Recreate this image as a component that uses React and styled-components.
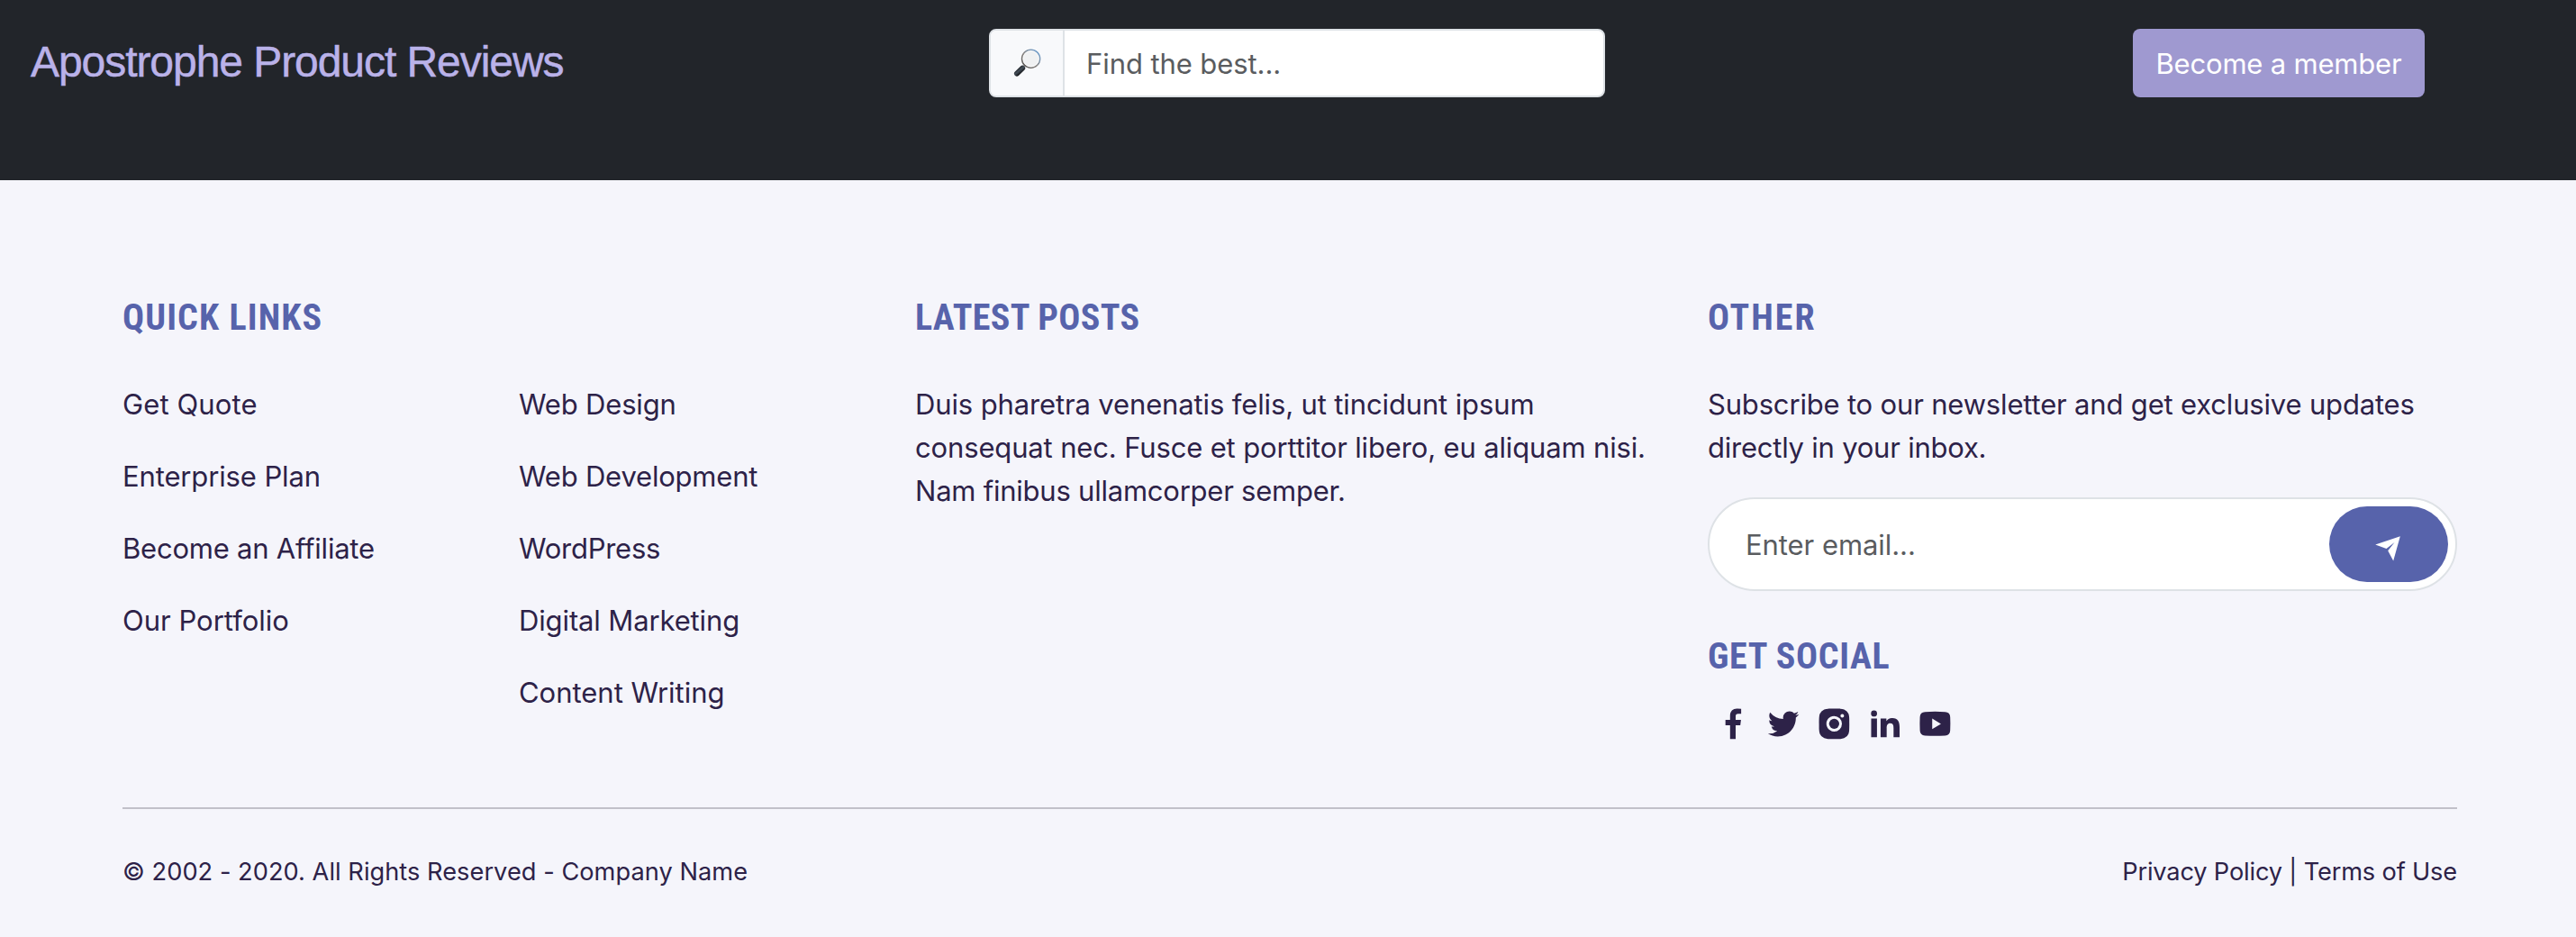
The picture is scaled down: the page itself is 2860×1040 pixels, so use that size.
import React from 'react';
import styled, { createGlobalStyle } from 'styled-components';
import { BiLogoFacebook, BiLogoTwitter, BiLogoInstagramAlt } from 'react-icons/bi';

const GlobalStyle = createGlobalStyle`
  *, *::before, *::after { box-sizing: border-box; }
  body {
    margin: 0;
    background: #f5f5fb;
    color: #2d2248;
    font-family: Inter, "Liberation Sans", sans-serif;
    font-size: 31px;
    line-height: 48px;
  }
`;

const Page = styled.div`
  width: 2860px;
  height: 1040px;
  overflow: hidden;
`;

const Header = styled.header`
  display: grid;
  grid-template-columns: 1064px 684px 1fr;
  align-items: start;
  height: 200px;
  padding: 32px 168px 0 34px;
  background: #22252a;
`;

const Brand = styled.a`
  color: #bab2e9;
  font-family: "Liberation Sans", Arial, sans-serif;
  font-size: 48px;
  line-height: 74px;
  letter-spacing: -1.06px;
  white-space: nowrap;
  -webkit-text-stroke: 0.5px #bab2e9;
`;

const SearchGroup = styled.div`
  display: flex;
  height: 76px;
  border: 2px solid #dee2e6;
  border-radius: 8px;
  overflow: hidden;
  background: #fff;
`;

const SearchPrefix = styled.span`
  display: flex;
  align-items: center;
  justify-content: center;
  width: 82px;
  border-right: 2px solid #dee2e6;
  background: #f8f9fb;
`;

const Placeholder = styled.span`
  flex: 1;
  padding: ${(p) => p.$pad};
  color: #5a5c5f;
  letter-spacing: ${(p) => p.$ls || 0}px;
`;

const MemberButton = styled.button`
  justify-self: end;
  width: 324px;
  height: 76px;
  padding: 1px 0 0;
  border: 0;
  border-radius: 8px;
  background: #9f99d0;
  color: #fff;
  font: inherit;
  letter-spacing: -0.19px;
`;

const Footer = styled.footer`
  padding: 127px 132px 0 136px;
`;

const Columns = styled.div`
  display: grid;
  grid-template-columns: 880px 880px 832px;
  height: 569px;
`;

const Heading = styled.h5`
  margin: ${(p) => p.$top || 0}px 0 ${(p) => p.$bottom}px;
  color: #5763ab;
  font-family: Roboto, sans-serif;
  font-size: 40px;
  font-weight: 700;
  font-stretch: 75%;
  line-height: 51px;
  letter-spacing: ${(p) => p.$ls || 0}px;
`;

const LinkColumns = styled.div`
  display: grid;
  grid-template-columns: 440px 440px;
`;

const LinkList = styled.ul`
  display: flex;
  flex-direction: column;
  gap: 32px;
  margin: 0;
  padding: 0;
  list-style: none;
`;

const LinkItem = styled.li`
  letter-spacing: ${(p) => p.$ls}px;
`;

const Paragraph = styled.p`
  margin: 0;
`;

const Line = styled.span`
  display: block;
  white-space: nowrap;
  letter-spacing: ${(p) => p.$ls}px;
`;

const EmailForm = styled.form`
  display: flex;
  align-items: center;
  height: 104px;
  margin-top: 31px;
  padding: 8px;
  border: 2px solid #dee2e6;
  border-radius: 52px;
  background: #fff;
`;

const SendButton = styled.button`
  display: flex;
  align-items: center;
  justify-content: center;
  width: 132px;
  height: 84px;
  padding: 9px 3px 0 0;
  border: 0;
  border-radius: 42px;
  background: #5763ab;
`;

const SocialRow = styled.div`
  display: flex;
  gap: 11.3px;
  padding-left: 6px;
  font-size: 44.8px;

  svg { display: block; }
`;

const TwitterIcon = styled(BiLogoTwitter)`
  transform: scale(0.94);
`;

const Divider = styled.hr`
  height: 2px;
  margin: 0 0 49px;
  border: 0;
  background: #c1c0c9;
`;

const Bottom = styled.div`
  display: flex;
  justify-content: space-between;
  font-size: 27.2px;
  line-height: 42px;
`;

const SmallText = styled.span`
  letter-spacing: ${(p) => p.$ls}px;
`;

const services = [
  ['Get Quote', 0.12],
  ['Enterprise Plan', -0.13],
  ['Become an Affiliate', -0.22],
  ['Our Portfolio', 0],
];

const topics = [
  ['Web Design', -0.17],
  ['Web Development', -0.2],
  ['WordPress', -0.26],
  ['Digital Marketing', -0.13],
  ['Content Writing', -0.02],
];

const posts = [
  ['Duis pharetra venenatis felis, ut tincidunt ipsum', -0.13],
  ['consequat nec. Fusce et porttitor libero, eu aliquam nisi.', -0.15],
  ['Nam finibus ullamcorper semper.', -0.23],
];

const newsletter = [
  ['Subscribe to our newsletter and get exclusive updates', -0.175],
  ['directly in your inbox.', -0.23],
];

function MagnifierIcon() {
  return (
    <svg width="32" height="32" viewBox="0 0 32 32" fill="none">
      <defs>
        <linearGradient id="rim" x1="10" y1="21" x2="28" y2="2" gradientUnits="userSpaceOnUse">
          <stop offset="0" stopColor="#4a4745" />
          <stop offset="0.5" stopColor="#8b8784" />
          <stop offset="1" stopColor="#6f9fd0" />
        </linearGradient>
        <linearGradient id="grip" x1="5" y1="22" x2="10" y2="28" gradientUnits="userSpaceOnUse">
          <stop offset="0" stopColor="#15181b" />
          <stop offset="0.45" stopColor="#46505a" />
          <stop offset="1" stopColor="#08090a" />
        </linearGradient>
      </defs>
      <path d="M14.6 17.6 11.6 20.6" stroke="#aaa" strokeWidth="2" />
      <path d="M11.2 21.6 5 27.6" stroke="url(#grip)" strokeWidth="6" strokeLinecap="round" />
      <circle cx="20.6" cy="11.2" r="10" fill="#f0f1f2" stroke="url(#rim)" strokeWidth="1.6" />
      <circle cx="20.6" cy="11.2" r="8.8" stroke="#fff" strokeWidth="0.7" />
    </svg>
  );
}

function PlaneIcon() {
  return (
    <svg width="28" height="28" viewBox="0 0 28 28" fill="#fff">
      <path d="M27.8 0.2 0.2 9.6 12.5 13.9 21.5 6.9 14.2 16.2 20.2 27.6Z" />
    </svg>
  );
}

function LinkedinIcon() {
  return (
    <svg width="1em" height="1em" viewBox="0 0 24 24" fill="currentColor">
      <circle cx="5.7" cy="5.85" r="1.8" />
      <path d="M4 8.85h3.45V20H4zM9.6 8.85h3.45v1.53h.05c.48-.9 1.64-1.85 3.4-1.85 3.62 0 4.4 2.37 4.4 5.45V20h-3.58v-5.33c0-1.33-.03-3.05-1.9-3.05-1.9 0-2.2 1.45-2.2 2.95V20H9.6z" />
    </svg>
  );
}

function YoutubeIcon() {
  return (
    <svg width="1em" height="1em" viewBox="0 0 24 24" fill="currentColor" fillRule="evenodd">
      <path d="M6 4.9Q12 4.6 18 4.9Q20.9 5 21 8Q21.2 12 21 16Q20.9 18.9 18 19Q12 19.3 6 19Q3.1 18.9 3 16Q2.8 12 3 8Q3.1 5 6 4.9ZM10.3 8.8V15.2L15.5 12Z" />
    </svg>
  );
}

function TextLines({ lines }) {
  return (
    <Paragraph>
      {lines.map(([text, ls]) => (
        <Line key={text} $ls={ls}>{text}</Line>
      ))}
    </Paragraph>
  );
}

function Links({ items }) {
  return (
    <LinkList>
      {items.map(([text, ls]) => (
        <LinkItem key={text} $ls={ls}>{text}</LinkItem>
      ))}
    </LinkList>
  );
}

export default function App() {
  return (
    <Page>
      <GlobalStyle />
      <Header>
        <Brand>Apostrophe Product Reviews</Brand>
        <SearchGroup>
          <SearchPrefix><MagnifierIcon /></SearchPrefix>
          <Placeholder $pad="13px 24px 11px" $ls={-0.08}>Find the best...</Placeholder>
        </SearchGroup>
        <MemberButton>Become a member</MemberButton>
      </Header>
      <Footer>
        <Columns>
          <section>
            <Heading $bottom={47} $ls={1.1}>QUICK LINKS</Heading>
            <LinkColumns>
              <Links items={services} />
              <Links items={topics} />
            </LinkColumns>
          </section>
          <section>
            <Heading $bottom={47} $ls={0.35}>LATEST POSTS</Heading>
            <TextLines lines={posts} />
          </section>
          <section>
            <Heading $bottom={47} $ls={2}>OTHER</Heading>
            <TextLines lines={newsletter} />
            <EmailForm>
              <Placeholder $pad="1px 0 0 32px" $ls={-0.06}>Enter email...</Placeholder>
              <SendButton type="button"><PlaneIcon /></SendButton>
            </EmailForm>
            <Heading $top={47} $bottom={27} $ls={0.65}>GET SOCIAL</Heading>
            <SocialRow>
              <BiLogoFacebook />
              <TwitterIcon />
              <BiLogoInstagramAlt />
              <LinkedinIcon />
              <YoutubeIcon />
            </SocialRow>
          </section>
        </Columns>
        <Divider />
        <Bottom>
          <SmallText $ls={0.04}>© 2002 - 2020. All Rights Reserved - Company Name</SmallText>
          <SmallText $ls={-0.16}>Privacy Policy | Terms of Use</SmallText>
        </Bottom>
      </Footer>
    </Page>
  );
}
